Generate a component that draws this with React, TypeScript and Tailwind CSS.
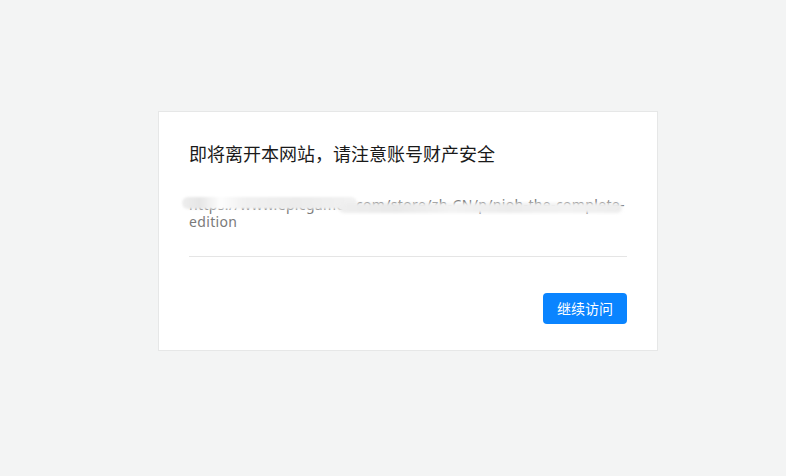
import React from "react";

export default function App() {
  return (
    <div className="min-h-[476px] w-full bg-[#f3f4f4] pt-[111px] pl-[158px]" style={{ fontFamily: '"Noto Sans", "Noto Sans CJK SC", sans-serif' }}>
      <div className="w-[500px] border border-[#e6e7e7] bg-white px-[30px] pt-[29px] pb-[26px]">
        <h1 className="text-[18px] leading-[24px] text-[#1a1a1a] font-normal" style={{ fontFamily: '"Noto Sans CJK SC", sans-serif' }}>
          即将离开本网站，请注意账号财产安全
        </h1>
        <div className="relative mt-[31px] text-[14px] leading-[17px] tracking-[0.35px] text-[#7a7a7a]">
          <p>
            https://www.epicgames.com/store/zh-CN/p/nioh-the-complete-
            <br />
            edition
          </p>
          <div className="absolute left-[-7px] top-[1px] h-[12px] w-[175px] rounded-[6px] bg-[linear-gradient(90deg,#eeeeee_0%,#e6e6e6_10%,#fdfdfd_22%,#f1f1f1_35%,#ececec_65%,#f2f2f2_100%)] blur-[1px]" />
          <div className="absolute left-[150px] top-[7px] h-[10px] w-[283px] rounded-full bg-[linear-gradient(90deg,#eeeeee_0%,#e9e9e9_20%,#f3f3f3_40%,#ececec_60%,#f2f2f2_80%,#ededed_100%)] blur-[1.5px]" />
        </div>
        <div className="mt-[26px] h-px bg-[#e5e5e5]" />
        <div className="mt-[36px] flex justify-end">
          <button className="h-[31px] w-[84px] rounded-[4px] bg-[#0a84ff] text-[14px] text-white" style={{ fontFamily: '"Noto Sans CJK SC", sans-serif' }}>
            继续访问
          </button>
        </div>
      </div>
    </div>
  );
}
